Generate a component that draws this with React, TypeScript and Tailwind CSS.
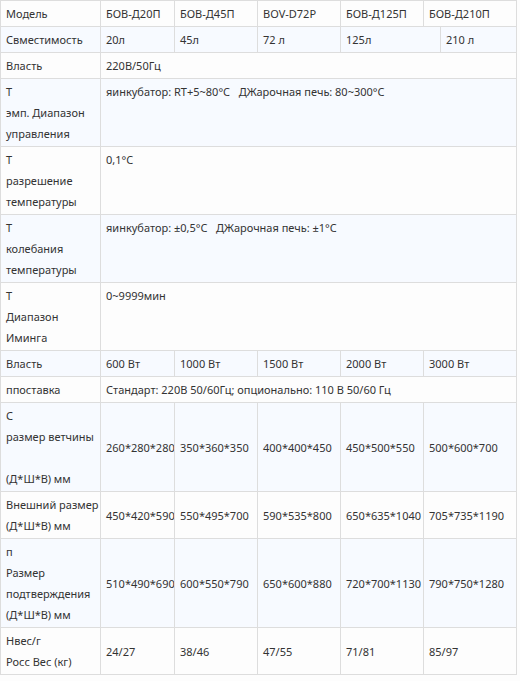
import React from "react";

type Cell = { w: number; lines: string[] };
type Row = { bg: string; align: "top" | "middle"; cells: Cell[] };

const W = [100, 74, 83, 83, 83, 94];
const L = (s: string) => s.split("|");

const six = (label: string[], vals: string[]): Cell[] => [
  { w: W[0], lines: label },
  ...vals.map((v, i) => ({ w: W[i + 1], lines: [v] })),
];
const span = (label: string[], val: string[]): Cell[] => [
  { w: W[0], lines: label },
  { w: 417, lines: val },
];

const WHITE = "bg-[#fdfdfd]";
const BLUE = "bg-[#f7faff]";

const rows: Row[] = [
  { bg: WHITE, align: "middle", cells: six(["Модель"], ["БОВ-Д20П", "БОВ-Д45П", "BOV-D72P", "БОВ-Д125П", "БОВ-Д210П"]) },
  {
    bg: BLUE,
    align: "middle",
    cells: [
      { w: 100, lines: ["Свместимость"] },
      { w: 74, lines: ["20л"] },
      { w: 83, lines: ["45л"] },
      { w: 83, lines: ["72 л"] },
      { w: 100, lines: ["125л"] },
      { w: 77, lines: ["210 л"] },
    ],
  },
  { bg: WHITE, align: "middle", cells: span(["Власть"], ["220В/50Гц"]) },
  { bg: BLUE, align: "top", cells: span(L("Т|эмп. Диапазон|управления"), ["яинкубатор: RT+5~80°C \u00a0\u00a0ДЖарочная печь: 80~300°C"]) },
  { bg: WHITE, align: "top", cells: span(L("Т|разрешение|температуры"), ["0,1°C"]) },
  { bg: BLUE, align: "top", cells: span(L("Т|колебания|температуры"), ["яинкубатор: ±0,5°C \u00a0\u00a0ДЖарочная печь: ±1°C"]) },
  { bg: WHITE, align: "top", cells: span(L("Т|Диапазон|Иминга"), ["0~9999мин"]) },
  { bg: BLUE, align: "middle", cells: six(["Власть"], ["600 Вт", "1000 Вт", "1500 Вт", "2000 Вт", "3000 Вт"]) },
  { bg: WHITE, align: "middle", cells: span(["ппоставка"], ["Стандарт: 220В 50/60Гц; опционально: 110 В 50/60 Гц"]) },
  { bg: BLUE, align: "middle", cells: six(L("С|размер ветчины|\u00a0|(Д*Ш*В) мм"), ["260*280*280", "350*360*350", "400*400*450", "450*500*550", "500*600*700"]) },
  { bg: WHITE, align: "middle", cells: six(L("Внешний размер|(Д*Ш*В) мм"), ["450*420*590", "550*495*700", "590*535*800", "650*635*1040", "705*735*1190"]) },
  { bg: BLUE, align: "middle", cells: six(L("п|Размер|подтверждения|(Д*Ш*В) мм"), ["510*490*690", "600*550*790", "650*600*880", "720*700*1130", "790*750*1280"]) },
  { bg: WHITE, align: "middle", cells: six(L("Нвес/г|Росс Вес (кг)"), ["24/27", "38/46", "47/55", "71/81", "85/97"]) },
];

export default function App() {
  return (
    <div
      className="w-[520px] h-[681px] bg-[#fdfdfd] text-[#333333] text-[11px] leading-[21px]"
      style={{ fontFamily: '"Noto Sans", "Open Sans", sans-serif' }}
    >
      <div className="w-[517px] border-r border-b border-[#dddddd]">
        {rows.map((r, ri) => (
          <div key={ri} className={`flex ${r.bg}`}>
            {r.cells.map((c, ci) => (
              <div
                key={ci}
                className={`shrink-0 border-l border-t border-[#dddddd] pl-[5px] pr-[2px] py-[2px] whitespace-nowrap flex flex-col ${
                  r.align === "middle" ? "justify-center" : "justify-start"
                }`}
                style={{ width: c.w }}
              >
                {c.lines.map((t, ti) => (
                  <div key={ti}>{t}</div>
                ))}
              </div>
            ))}
          </div>
        ))}
      </div>
    </div>
  );
}
